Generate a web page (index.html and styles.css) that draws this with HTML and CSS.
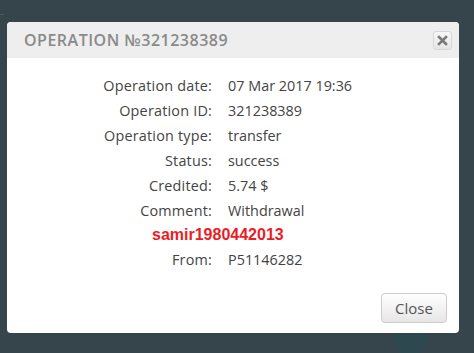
FILE: index.html
```html
<!DOCTYPE html>
<html lang="en">
  <head>
    <meta charset="UTF-8" />
    <meta name="viewport" content="width=device-width, initial-scale=1.0" />
    <title>Operation</title>
    <link rel="stylesheet" href="styles.css">
  </head>

  <body>
    <div class="backdrop">
      <!-- faint page behind the overlay -->
      <div class="ghost-line"></div>
      <div class="ghost-circle"></div>

      <!-- Operation dialog -->
      <div class="modal">
        <div class="modal-header">
          <div class="modal-title">Operation №321238389</div>
          <button class="btn-x" type="button" aria-label="Close">
            <svg width="11" height="11" viewBox="0 0 11 11">
              <path d="M2 2 L9 9 M9 2 L2 9" stroke="#7a7a7a" stroke-width="2.6" stroke-linecap="square" />
            </svg>
          </button>
        </div>

        <div class="modal-body">
          <div class="details">
            <div class="label">Operation date:</div>
            <div class="value">07 Mar 2017 19:36</div>
            <div class="label">Operation ID:</div>
            <div class="value">321238389</div>
            <div class="label">Operation type:</div>
            <div class="value">transfer</div>
            <div class="label">Status:</div>
            <div class="value">success</div>
            <div class="label">Credited:</div>
            <div class="value">5.74 $</div>
            <div class="label">Comment:</div>
            <div class="value">Withdrawal</div>
          </div>
          <div class="note">samir1980442013</div>
          <div class="details">
            <div class="label">From:</div>
            <div class="value">P51146282</div>
          </div>
        </div>

        <div class="modal-footer">
          <button class="btn" type="button">Close</button>
        </div>
      </div>
    </div>
  </body>
</html>
```

FILE: styles.css
```css
body,
html {
  margin: 0;
  padding: 0;
  width: 100%;
  height: 100%;
  font-family: "Open Sans", sans-serif;
}

/* Dark overlay */
.backdrop {
  background-color: #36444b;
  height: 100vh;
  padding: 22px 0 0 7px;
  box-sizing: border-box;
  position: relative;
  overflow: hidden;
}

.ghost-line {
  position: absolute;
  top: 14px;
  left: 0;
  width: 4px;
  height: 1px;
  background-color: #4a575e;
}

.ghost-circle {
  position: absolute;
  top: 322px;
  left: 393px;
  width: 34px;
  height: 34px;
  border-radius: 50%;
  background-color: #2e4850;
}

/* Dialog */
.modal {
  width: 452px;
  height: 311px;
  background-color: #ffffff;
  border-radius: 4px;
  display: flex;
  flex-direction: column;
  position: relative;
  z-index: 1;
  overflow: hidden;
}

.modal-header {
  background-color: #eeeeee;
  height: 36px;
  display: flex;
  align-items: center;
  justify-content: space-between;
  padding: 0 7px 0 17px;
}

.modal-title {
  color: #8a8a8a;
  font-size: 16px;
  font-weight: 600;
  letter-spacing: 0.5px;
  text-transform: uppercase;
}

.btn-x {
  width: 19px;
  height: 19px;
  padding: 0;
  border: 1px solid #d6d6d6;
  border-radius: 3px;
  background: linear-gradient(#f6f6f6, #e6e6e6);
  display: flex;
  align-items: center;
  justify-content: center;
  margin-top: 1px;
}

.modal-body {
  flex: 1;
  padding-top: 15px;
  color: #444444;
  font-size: 14.4px;
}

.details {
  display: grid;
  grid-template-columns: 205px auto;
  column-gap: 16px;
  line-height: 25px;
}

.label {
  text-align: right;
  letter-spacing: 0.2px;
}

.note {
  color: #ec1c24;
  font-family: "Liberation Sans", Arial, sans-serif;
  font-weight: bold;
  font-size: 16px;
  line-height: 24px;
  padding-left: 145px;
}

/* Footer */
.modal-footer {
  display: flex;
  justify-content: flex-end;
  padding: 0 12px 10px 0;
}

.btn {
  width: 66px;
  height: 30px;
  border: 1px solid #cccccc;
  border-radius: 4px;
  background: linear-gradient(#ffffff, #e6e6e6);
  color: #555555;
  font-family: "Open Sans", sans-serif;
  font-size: 15px;
  padding: 0;
}
```
